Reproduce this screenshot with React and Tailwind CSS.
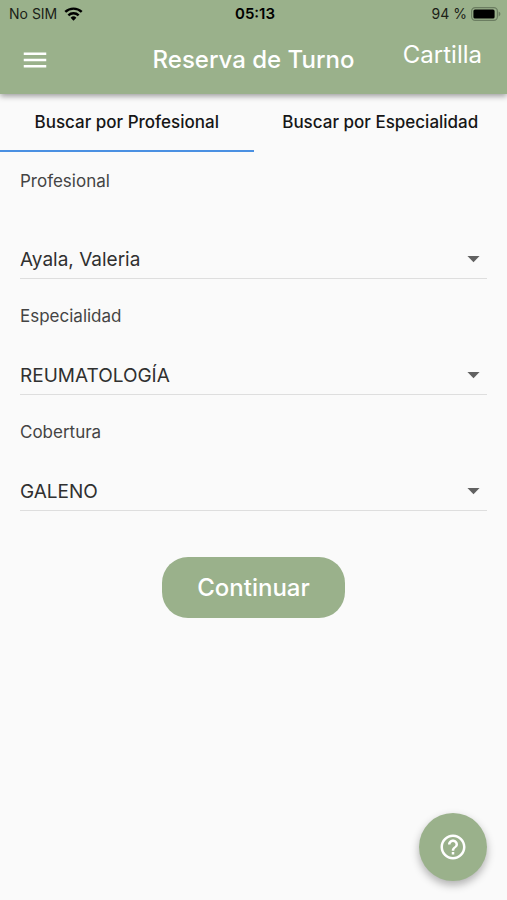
import { useState } from "react";
import { MdArrowDropDown, MdHelpOutline, MdMenu } from "react-icons/md";

const TABS = [
  { key: "profesional", title: "Buscar por Profesional" },
  { key: "especialidad", title: "Buscar por Especialidad" },
];

const FIELDS = [
  { id: "profesional", label: "Profesional", options: ["Ayala, Valeria"], gap: "mt-[46px]" },
  { id: "especialidad", label: "Especialidad", options: ["REUMATOLOGÍA"], gap: "mt-[27px]" },
  { id: "cobertura", label: "Cobertura", options: ["GALENO"], gap: "mt-[27px]" },
];

function WifiIcon() {
  return (
    <svg viewBox="0 0 20 15" className="h-[14px] w-[19px] text-black" fill="none" stroke="currentColor" strokeWidth="2.6" aria-hidden="true">
      <path d="M1.2 5.3a12.6 12.6 0 0 1 17.6 0" />
      <path d="M4.5 8.9a7.9 7.9 0 0 1 11 0" />
      <path d="M10 14.6 6.9 11.5a4.5 4.5 0 0 1 6.2 0z" fill="currentColor" stroke="none" />
    </svg>
  );
}

function BatteryIcon() {
  return (
    <svg viewBox="0 0 30 14" className="h-[14px] w-[30px]" aria-hidden="true">
      <rect x="0.6" y="0.6" width="25.8" height="12.8" rx="3.6" fill="none" stroke="#6b7d61" strokeWidth="1.2" />
      <rect x="2.4" y="2.4" width="21.2" height="9.2" rx="1.6" fill="#000" />
      <path d="M27.6 4.6c2.4 0.8 2.4 4 0 4.8z" fill="#6b7d61" />
    </svg>
  );
}

function StatusBar() {
  return (
    <div className="grid h-7 grid-cols-[1fr_auto_1fr] items-center pl-[9px] pr-[6px] text-sm text-[#1b2117]">
      <div className="flex items-center gap-[7px]">
        <span>No SIM</span>
        <WifiIcon />
      </div>
      <span className="text-[15px] font-semibold text-black">05:13</span>
      <div className="flex items-center justify-end gap-1">
        <span>94 %</span>
        <BatteryIcon />
      </div>
    </div>
  );
}

function SelectField({ id, label, options, gap }) {
  return (
    <div>
      <label htmlFor={id} className="block text-[17px] leading-6 text-[#444444]">
        {label}
      </label>
      <div className={`relative border-b border-[#dedede] ${gap}`}>
        <select id={id} className="block h-[39px] w-full appearance-none bg-transparent pt-[3px] pr-10 text-[19px] text-[#303030] outline-none">
          {options.map((o) => <option key={o}>{o}</option>)}
        </select>
        <MdArrowDropDown className="pointer-events-none absolute -right-px top-[5px] size-[29px] text-[#616161]" />
      </div>
    </div>
  );
}

export default function App() {
  const [tab, setTab] = useState("profesional");

  return (
    <div className="flex min-h-screen flex-col bg-[#fafafa] font-['Inter',sans-serif]">
      <header className="z-10 bg-[#9ab18b] shadow-[0_2px_6px_rgba(0,0,0,0.4)]">
        <StatusBar />
        <div className="grid h-[66px] grid-cols-[1fr_auto_1fr] items-start px-5 text-white">
          <button type="button" aria-label="Menú" className="mt-[17px] justify-self-start">
            <MdMenu className="size-[30px]" />
          </button>
          <h1 className="mt-4 text-2xl font-medium">Reserva de Turno</h1>
          <a href="#cartilla" className="mr-[5px] mt-[11px] justify-self-end text-2xl">
            Cartilla
          </a>
        </div>
      </header>

      <div role="tablist" className="grid grid-cols-2">
        {TABS.map((t) => (
          <button
            key={t.key}
            type="button"
            role="tab"
            aria-selected={tab === t.key}
            onClick={() => setTab(t.key)}
            className={`h-[58px] border-b-2 pt-0.5 text-[17px] font-medium whitespace-nowrap text-[#161616] ${tab === t.key ? "border-[#4a90e2]" : "border-transparent"}`}
          >
            {t.title}
          </button>
        ))}
      </div>

      <main className="flex flex-col px-5 pt-[17px]">
        <div className="flex flex-col gap-[25px]">
          {FIELDS.map((f) => <SelectField key={f.id} {...f} />)}
        </div>
        <button type="button" className="mt-[46px] h-[61px] self-center rounded-[26px] bg-[#9ab18b] px-[35px] text-2xl font-medium text-white">
          Continuar
        </button>
      </main>

      <button
        type="button"
        aria-label="Ayuda"
        className="fixed bottom-[19px] right-5 flex size-[68px] items-center justify-center rounded-full bg-[#9ab18b] text-white shadow-[0_4px_8px_rgba(0,0,0,0.3)]"
      >
        <MdHelpOutline className="size-[30px]" />
      </button>
    </div>
  );
}
